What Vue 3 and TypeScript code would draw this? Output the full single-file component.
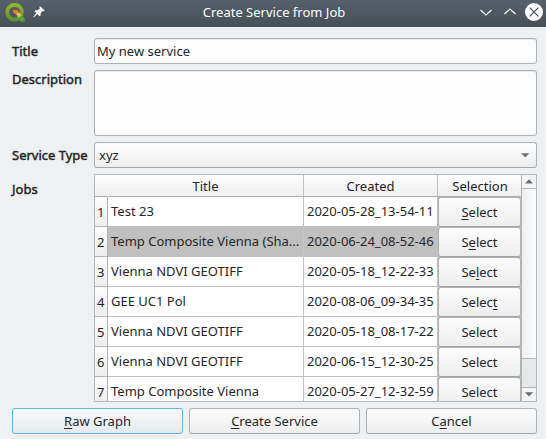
<script setup lang="ts">
import { ref } from 'vue'

interface Job {
  title: string
  created: string
  // index of the mnemonic letter in "Select", -1 for none
  key: number
}

const caption = 'Select'
const title = ref('My new service')
const description = ref('')
const selected = ref(1)

const jobs: Job[] = [
  { title: 'Test 23', created: '2020-05-28_13-54-11', key: 0 },
  { title: 'Temp Composite Vienna (Sha...', created: '2020-06-24_08-52-46', key: 1 },
  { title: 'Vienna NDVI GEOTIFF', created: '2020-05-18_12-22-33', key: 2 },
  { title: 'GEE UC1 Pol', created: '2020-08-06_09-34-35', key: 5 },
  { title: 'Vienna NDVI GEOTIFF', created: '2020-05-18_08-17-22', key: -1 },
  { title: 'Vienna NDVI GEOTIFF', created: '2020-06-15_12-30-25', key: -1 },
  { title: 'Temp Composite Vienna', created: '2020-05-27_12-32-59', key: -1 },
]
</script>

<template>
  <div class="dialog">
    <header class="titlebar">
      <svg class="logo" width="22" height="20" viewBox="0 0 22 20">
        <defs>
          <linearGradient id="ring" x1="0" y1="0" x2="0" y2="1">
            <stop offset="0" stop-color="#92b427" />
            <stop offset="1" stop-color="#5a9632" />
          </linearGradient>
        </defs>
        <circle cx="9.600" cy="9.200" r="7.400" fill="none" stroke="url(#ring)" stroke-width="3.700" />
        <path d="M12 11.500l3-1 4.800 5v3h-4.300l-4-4.600z" fill="#5f9b36" />
        <path d="M10.500 10.500l2.500-2 3.500 3.500-2.500 2.500z" fill="#dfc45b" />
        <path d="M7.800 7l4-.2 2 2.200-2.800 2.600-2.700-1.800z" fill="#ee7b2c" />
      </svg>
      <svg class="pin" width="12" height="12" viewBox="0 0 12 12">
        <path d="M7 .3L11.700 4.500 10.500 5.300 9.400 5 7.700 7.300 7.600 9.500 6.600 10.300 4.300 8 .8 11.500.300 11.100 3.300 7 1.600 5.200 2.400 4.300 4.600 4.300 6.900 2.400 6.300 1z" fill="#fcfcfc" />
      </svg>
      <h1>Create Service from Job</h1>
      <svg class="winbtns" width="66" height="20" viewBox="0 0 66 20">
        <path d="M4.500 10l5.500 5 5.500-5M28.500 14l5.500-5 5.500 5" fill="none" stroke="#fcfcfc" stroke-width="1.200" />
        <circle cx="58" cy="12" r="9" fill="#fcfcfc" />
        <path d="M53.700 7.700l8.600 8.600M62.300 7.700l-8.600 8.600" stroke="#475057" stroke-width="1.200" />
      </svg>
    </header>

    <main class="form">
      <label>Title</label>
      <input v-model="title" class="field line" type="text" />
      <label class="top">Description</label>
      <textarea v-model="description" class="field area"></textarea>
      <label>Service Type</label>
      <div class="combo">
        <span>xyz</span>
        <svg width="9" height="5" viewBox="0 0 9 5"><path d="M.3.300h8L4.300 4.500z" fill="#6b6e70" /></svg>
      </div>
      <label class="jobs-label">Jobs</label>
      <div class="table">
        <div class="grid">
          <div class="row head">
            <span class="num"></span><span class="name">Title</span><span class="date">Created</span><span class="action">Selection</span>
          </div>
          <div v-for="(job, i) in jobs" :key="i" class="row" :class="{ selected: i === selected }">
            <span class="num">{{ i + 1 }}</span>
            <span class="name">{{ job.title }}</span>
            <span class="date">{{ job.created }}</span>
            <span class="action"><button class="select" type="button"><span v-for="(c, n) in caption" :key="n" :class="{ key: n === job.key }">{{ c }}</span></button></span>
          </div>
        </div>
        <div class="scroll">
          <div class="step"><svg width="8" height="5" viewBox="0 0 8 5"><path d="M0 4.500h8L4 .3z" fill="#6b6e70" /></svg></div>
          <div class="thumb"></div>
          <div class="trough"></div>
          <div class="step down"><svg width="8" height="5" viewBox="0 0 8 5"><path d="M0 .3h8L4 4.500z" fill="#6b6e70" /></svg></div>
        </div>
      </div>
    </main>

    <footer class="buttons">
      <button class="push default" type="button"><span class="key">R</span>aw Graph</button>
      <button class="push" type="button"><span class="key">C</span>reate Service</button>
      <button class="push" type="button">C<span class="key">a</span>ncel</button>
    </footer>
  </div>
</template>

<style>
body {
  margin: 0;
  background: #eff0f1;
}
</style>

<style scoped>
.dialog {
  width: 546px;
  height: 439px;
  overflow: hidden;
  display: flex;
  flex-direction: column;
  background: #eff0f1;
  color: #232629;
  font: 13px/18px "Noto Sans", sans-serif;
}
.dialog * {
  box-sizing: border-box;
}
.titlebar {
  height: 27px;
  flex: none;
  display: flex;
  align-items: flex-start;
  background: linear-gradient(#566069, #475057);
  color: #fcfcfc;
}
.logo {
  margin: 3px 0 0 5px;
}
.pin {
  margin: 6px 0 0 6px;
}
h1 {
  flex: 1;
  margin: 3px 0 0;
  padding-left: 27px;
  text-align: center;
  font-size: 13px;
  line-height: 19px;
  font-weight: 400;
}
.winbtns {
  width: 66px;
  height: 24px;
  overflow: visible;
  margin-right: 4px;
  margin-top: -2px;
}
.form {
  display: grid;
  grid-template-columns: 76px 443px;
  grid-template-rows: 26px 66px 26px 228px;
  gap: 6px;
  padding: 11px 9px 0 12px;
}
label {
  padding-top: 4px;
  white-space: nowrap;
  -webkit-text-stroke: 0.45px #232629;
}
label.top {
  padding-top: 0;
}
.jobs-label {
  padding-top: 6px;
}
.field {
  display: block;
  width: 100%;
  height: 100%;
  margin: 0;
  padding: 0 2px;
  border: 1px solid #aeb0b1;
  border-radius: 3px;
  outline: 0;
  resize: none;
  background: #fcfcfc;
  box-shadow: inset 0 1px #e9e9ea;
  color: inherit;
  font: inherit;
}
.combo {
  display: flex;
  align-items: center;
  justify-content: space-between;
  padding: 0 6px 0 4px;
  border: 1px solid #b0b1b2;
  border-bottom-color: #a5a6a7;
  border-radius: 3px;
  background: linear-gradient(#fcfcfc, #eeeeef);
}
.table {
  display: flex;
  overflow: hidden;
  border: 1px solid #b5b6b7;
  background: #fff;
}
.grid {
  width: 427px;
  flex: none;
}
.row {
  display: grid;
  grid-template-columns: 13px 196px 134px 84px;
  height: 30px;
}
.row > span {
  border-right: 1px solid #c0c0c0;
  border-bottom: 1px solid #c0c0c0;
  white-space: nowrap;
  overflow: hidden;
  line-height: 28px;
}
.row > .name,
.row > .date {
  padding-left: 3px;
}
.row > .num {
  padding-left: 2px;
  line-height: 31px;
  border-color: #b0b1b2;
  background: linear-gradient(#fcfcfc, #eeeeef);
}
.selected > .name,
.selected > .date {
  background: #c0c0c0;
}
.selected > .name {
  border-right-color: #c8c8c8;
}
.row > .action {
  border: 0;
  background: #c4c4c5;
}
.head {
  height: 22px;
  background: linear-gradient(#fdfdfd, #eeeeef);
}
.head > span,
.head > .num,
.head > .action {
  padding: 0;
  text-align: center;
  line-height: 22px;
  background: none;
  border-bottom: 1px solid #acadae;
}
.head > .num {
  border-right-color: transparent;
}
.row.head > .name,
.row.head > .date {
  padding: 0;
}
.row.head > .action {
  background: none;
  border-bottom: 1px solid #acadae;
}
.select {
  display: block;
  width: 83px;
  height: 30px;
  margin: 0;
  padding: 0;
  border: 1px solid #b0b1b2;
  border-bottom-color: #a2a3a4;
  border-radius: 3px;
  background: linear-gradient(#fcfcfc, #eeeeef);
  color: inherit;
  font: inherit;
}
.key {
  text-decoration: underline;
  text-decoration-thickness: 1px;
  text-underline-offset: 2px;
  text-decoration-skip-ink: none;
}
.scroll {
  width: 14px;
  display: flex;
  flex-direction: column;
  box-shadow: -1px 0 #b5b6b7;
  background: #e6e8e8;
}
.step {
  height: 14px;
  flex: none;
  display: flex;
  align-items: center;
  justify-content: center;
  border-bottom: 1px solid #b5b6b7;
  background: #f4f4f5;
}
.thumb {
  height: 170px;
  border-bottom: 1px solid #b5b6b7;
  background: linear-gradient(90deg, #eeeeef, #fcfcfc);
}
.trough {
  flex: 1;
}
.step.down {
  border-bottom: 0;
  border-top: 1px solid #b5b6b7;
}
.buttons {
  display: grid;
  grid-template-columns: repeat(3, 171px);
  gap: 6px;
  padding: 6px 9px 0 12px;
}
.push {
  height: 26px;
  margin: 0;
  padding: 0;
  border: 1px solid #b0b1b2;
  border-bottom-color: #a2a3a4;
  border-radius: 3px;
  background: linear-gradient(#fcfcfc, #eeeeef);
  color: inherit;
  font: inherit;
}
.default {
  border-color: #5fb6e2;
  background: linear-gradient(#fcfcfc, #e3e9ed);
}
</style>
